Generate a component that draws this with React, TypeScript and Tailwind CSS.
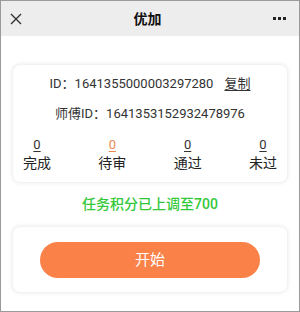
import React from 'react';

const stats = [
  { label: '完成', value: 0, color: 'text-[#333]' },
  { label: '待审', value: 0, color: 'text-[#e98a54]' },
  { label: '通过', value: 0, color: 'text-[#333]' },
  { label: '未过', value: 0, color: 'text-[#333]' },
];

const App: React.FC = () => {
  return (
    <div
      className="w-[300px] h-[312px] border border-[#9a9a9a] bg-white flex flex-col overflow-hidden"
      style={{ fontFamily: "Roboto, 'Noto Sans CJK SC', sans-serif" }}
    >
      {/* Top bar */}
      <header className="h-[35px] shrink-0 bg-[#ededed] flex items-center justify-between px-[9px]">
        <svg width="12" height="12" viewBox="0 0 12 12" className="text-[#333]">
          <path d="M1 1 L11 11 M11 1 L1 11" stroke="currentColor" strokeWidth="1.4" fill="none" />
        </svg>
        <h1 className="text-[14px] font-bold text-[#111] leading-none">优加</h1>
        <div className="flex gap-[2px] pr-[4px]">
          <span className="w-[3px] h-[3px] bg-[#222]"></span>
          <span className="w-[3px] h-[3px] bg-[#222]"></span>
          <span className="w-[3px] h-[3px] bg-[#222]"></span>
        </div>
      </header>

      <main className="flex flex-col px-[11px]">
        {/* Info card */}
        <section className="mt-[28px] rounded-[8px] bg-white shadow-[0_0_4px_rgba(0,0,0,0.08)] border border-[#f2f2f2] pt-[9px] pb-[10px] px-[10px] text-[#333]">
          <div className="flex justify-center items-center text-[13px] leading-[20px]">
            <span>ID：1641355000003297280</span>
            <span className="ml-[11px] underline underline-offset-2">复制</span>
          </div>
          <div className="mt-[10px] text-center text-[13px] leading-[20px]">
            师傅ID：1641353152932478976
          </div>
          <div className="mt-[13px] flex justify-between">
            {stats.map((s) => (
              <div key={s.label} className="flex flex-col items-center">
                <span className={`text-[13px] leading-[16px] underline underline-offset-2 ${s.color}`}>{s.value}</span>
                <span className="mt-[1px] text-[14px] leading-[18px] text-[#222]">{s.label}</span>
              </div>
            ))}
          </div>
        </section>

        <p className="mt-[11px] text-center text-[14px] leading-[20px] font-medium text-[#33c83a]">
          任务积分已上调至700
        </p>

        {/* Action card */}
        <section className="mt-[12px] rounded-[8px] bg-white shadow-[0_0_4px_rgba(0,0,0,0.08)] border border-[#f2f2f2] pt-[15px] pb-[14px] px-[27px]">
          <button className="w-full h-[36px] rounded-full bg-[#fa8148] text-white text-[15px]">
            开始
          </button>
        </section>
      </main>
    </div>
  );
};

export default App;
